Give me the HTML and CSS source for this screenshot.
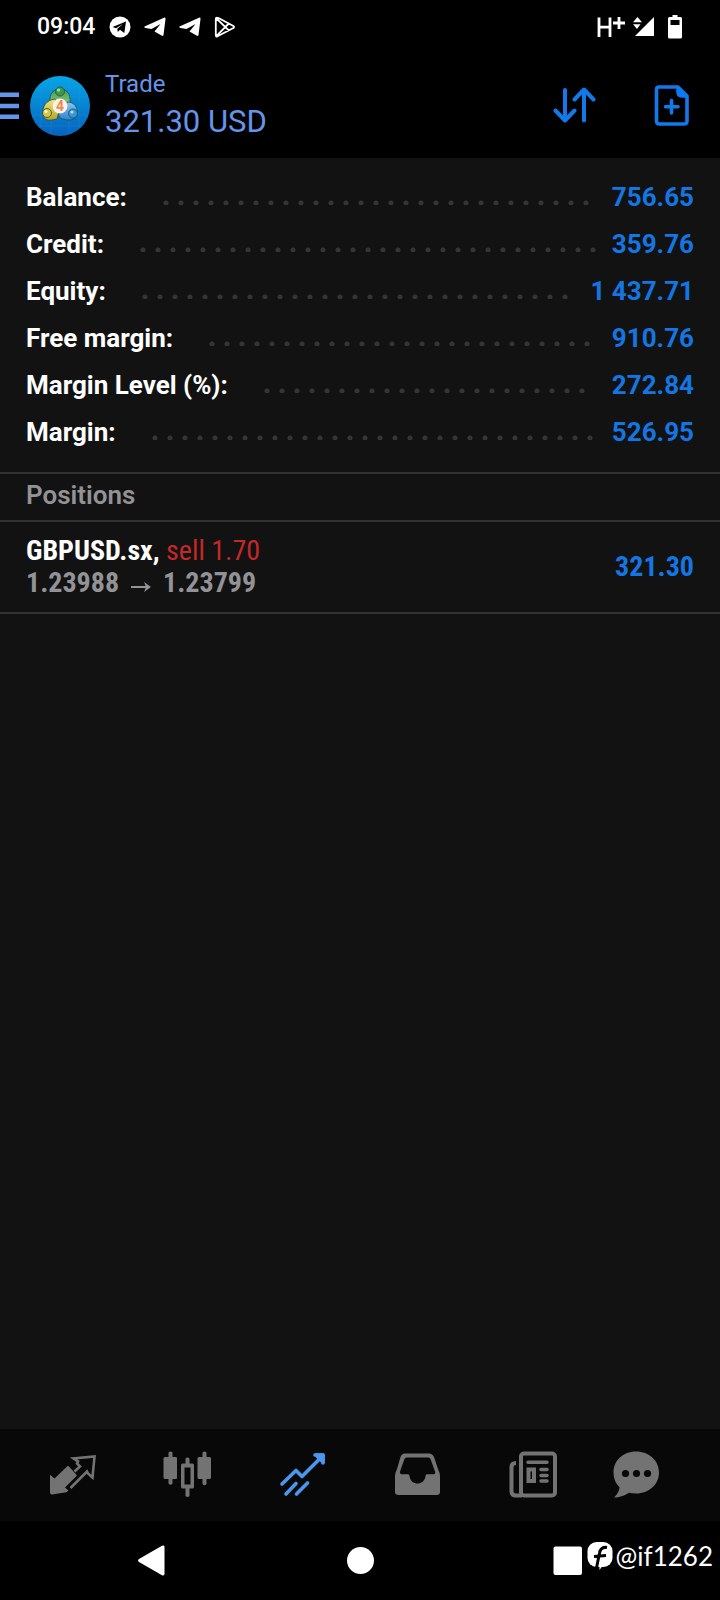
FILE: index.html
```html
<!DOCTYPE html>
<html lang="en">
<head>
<meta charset="utf-8">
<meta name="viewport" content="width=device-width, initial-scale=1">
<title>Trade</title>
<link rel="stylesheet" href="styles.css">
</head>
<body>
<div class="status">
  <time class="clock">09:04</time>
  <svg class="s-icon s-first" width="22" height="22" viewBox="0 0 22 22"><circle cx="11" cy="11" r="10.5" fill="#fff"/><path d="M3.5 11 17 5.5 15.3 17 11 13.8 8.8 16 8.3 12.8 14 8 7 12.2Z" fill="#000"/></svg>
  <svg class="s-icon" width="22" height="22" viewBox="0 0 22 22"><path d="M.5 10.5 20 1.7Q21.700 1.200 21.500 3L19.500 19Q19 20.500 17.500 19.500L10.500 15.500 16.500 8 7.500 13 1.500 12Q-.3 11.300.5 10.500Z" fill="#fff"/></svg>
  <svg class="s-icon" width="22" height="22" viewBox="0 0 22 22"><path d="M.5 10.5 20 1.7Q21.700 1.200 21.500 3L19.500 19Q19 20.500 17.500 19.500L10.500 15.500 16.500 8 7.500 13 1.500 12Q-.3 11.300.5 10.500Z" fill="#fff"/></svg>
  <svg class="s-icon" width="22" height="22" viewBox="0 0 22 22" fill="none" stroke="#fff" stroke-width="1.8" stroke-linejoin="round"><path d="M3 2Q1.800 1.200 1.800 3V19.500Q1.800 21 3.500 20.300L19.400 12Q20.600 11 19.400 10L4 1.800ZM2.500 2.500 14.800 14.300M2.500 19.800 14.800 7.500"/></svg>
  <span class="spacer"></span>
  <svg width="28" height="22" viewBox="0 0 28 22" fill="none" stroke="#fff"><path d="M2 1.500V21M13 1.500V21M2 11.200H13" stroke-width="2.800"/><path d="M22 1V13M16 7H28" stroke-width="2.800"/></svg>
  <svg class="signal" width="22" height="22" viewBox="0 0 22 22" fill="#fff"><path d="M21 1V20H2ZM0 6.200 4.500 1 9 6.200ZM0 8.200H7.500L4 13Z"/></svg>
  <svg class="battery" width="14" height="24" viewBox="0 0 14 24"><path d="M4.500 0H9.500V2H12.500Q14 2 14 3.500V22Q14 23.500 12.500 23.500H1.500Q0 23.500 0 22V3.500Q0 2 1.500 2H4.500Z" fill="#fff"/><path d="M2.500 5H11.500V10H2.500Z" fill="#000"/></svg>
</div>

<header class="bar">
  <button class="menu" aria-label="Menu"><svg width="19" height="28" viewBox="0 0 19 28" fill="#6595eb"><path d="M0 .5H19V5H0ZM0 11.700H19V16.200H0ZM0 22.500H19V27H0Z"/></svg></button>
  <svg class="logo" width="60" height="60" viewBox="0 0 60 60">
    <defs>
      <linearGradient id="sky" x1="0" y1="0" x2="0" y2="1"><stop offset="0" stop-color="#06a5e6"/><stop offset="1" stop-color="#0762bd"/></linearGradient>
      <linearGradient id="green" x1="0" y1="0" x2="0" y2="1"><stop offset="0" stop-color="#3f9a4a"/><stop offset="1" stop-color="#9bd08a"/></linearGradient>
      <linearGradient id="gold" x1="0" y1="0" x2="0" y2="1"><stop offset="0" stop-color="#f0e67a"/><stop offset="1" stop-color="#b9a41f"/></linearGradient>
      <linearGradient id="azure" x1="0" y1="0" x2="0" y2="1"><stop offset="0" stop-color="#8cc7ee"/><stop offset="1" stop-color="#2b83cb"/></linearGradient>
    </defs>
    <circle cx="30" cy="30" r="30" fill="url(#sky)"/>
    <path d="M11 8V52M21 2V58M39 2V58M49 8V52M8 11H52M2 21H58M2 39H58M8 50H52" stroke="#37a4e6" stroke-opacity=".25" stroke-width=".8"/>
    <g stroke="#1c4d56" stroke-width=".8">
      <path d="M20 27C19 17 24 13 30 13S41 17 40 27L37 31H24Z" fill="url(#green)"/>
      <path d="M25 23C16 24 12 31 13 38S18 45 27 43L29 36Z" fill="url(#gold)"/>
      <path d="M37 26C45 26 48 32 47 38S39 46 30 42L28 38 35 35Z" fill="url(#azure)"/>
      <circle cx="30" cy="15.500" r="4.500" fill="#3e9b48"/>
      <circle cx="17" cy="37" r="4.500" fill="#d9c545"/>
      <circle cx="43" cy="37.500" r="4.500" fill="#3a96d7"/>
    </g>
    <circle cx="28.500" cy="14" r="1.600" fill="#a8dda5"/><circle cx="16" cy="35.500" r="1.600" fill="#fff6b0"/><circle cx="42" cy="36" r="1.600" fill="#b4e0fa"/>
    <circle cx="30" cy="30" r="7.500" fill="#f8f3ee"/>
    <text class="logo-digit" x="30" y="35" text-anchor="middle">4</text>
  </svg>
  <div class="heading">
    <h1 class="title">Trade</h1>
    <p class="profit">321.30 USD</p>
  </div>
  <button class="tool" aria-label="Sort"><svg width="44" height="44" viewBox="0 0 44 44" fill="none" stroke="#1279ea" stroke-width="4" stroke-linecap="round" stroke-linejoin="round"><path d="M13 6V36M3.500 26.500 13 36.500 22.500 26.500M32 36.500V6M22.500 15.500 32 5.500 41.500 15.500"/></svg></button>
  <button class="tool" aria-label="New order"><svg width="44" height="44" viewBox="0 0 44 44" fill="none" stroke="#1279ea" stroke-width="3.600" stroke-linecap="round" stroke-linejoin="round"><path d="M9 3H28L37 12V37Q37 40 34 40H9.500Q6.500 40 6.500 37V5.500Q6.500 3 9 3ZM21.500 16.500V29M15.500 22.700H28"/><path d="M27 3V8.500Q27.500 13 32 13H37Z" fill="#087bfa" stroke-width="1.500"/></svg></button>
</header>

<main class="content">
  <dl class="summary">
    <div class="row"><dt>Balance:</dt><dd class="leader"><i class="dots"></i></dd><dd class="value">756.65</dd></div>
    <div class="row"><dt>Credit:</dt><dd class="leader"><i class="dots"></i></dd><dd class="value">359.76</dd></div>
    <div class="row"><dt>Equity:</dt><dd class="leader"><i class="dots"></i></dd><dd class="value">1 437.71</dd></div>
    <div class="row"><dt>Free margin:</dt><dd class="leader"><i class="dots"></i></dd><dd class="value">910.76</dd></div>
    <div class="row"><dt>Margin Level (%):</dt><dd class="leader"><i class="dots"></i></dd><dd class="value">272.84</dd></div>
    <div class="row"><dt>Margin:</dt><dd class="leader"><i class="dots"></i></dd><dd class="value">526.95</dd></div>
  </dl>
  <h2 class="section">Positions</h2>
  <article class="position">
    <div>
      <p class="line"><b>GBPUSD.sx,</b> <span class="sell">sell 1.70</span></p>
      <p class="line prices">1.23988 <svg class="arrow" width="20" height="12" viewBox="0 0 20 12" fill="none" stroke="#929297" stroke-width="2"><path d="M0 6H17"/><path d="M13 1 20 6 13 11 15 6Z" fill="#929297" stroke="none"/></svg> 1.23799</p>
    </div>
    <p class="line gain">321.30</p>
  </article>
</main>

<nav class="tabs">
  <button class="tab" aria-label="Quotes"><svg width="48" height="48" viewBox="0 0 48 48" fill="none" stroke="#737373" stroke-width="2.600"><path d="M2 17Q2 15 3.500 17L6.500 19.500 18.500 8Q20 6 21.500 8L29 16.500 17 28.500 20.500 31.500Q19 33.500 17 33.500L4 35.500Q2 35.500 2 33.500Z" transform="translate(0 8)" fill="#737373" stroke="none"/><path d="M26.500 20.500 32 15.500 29 12.500 30 10.500 25.500 7.500 46.500 5.500 44.500 26.500 40 22.500 39 20.500 22.500 37"/></svg></button>
  <button class="tab" aria-label="Charts"><svg width="48" height="48" viewBox="0 0 48 48" fill="#737373"><path d="M5.500 1.500Q7.500-.5 9.500 1.500V6H13Q14 6 14 7.500V26.500Q14 28 13 28H9.500V32.500Q7.500 35 5.500 32.500V28H2Q.5 28 .5 26.500V7.500Q.5 6 2 6H5.500ZM39.500 1.500Q41.500-.5 43.500 1.500V6H46.500Q48 6 48 7.500V26.500Q48 28 46.500 28H43.500V33Q41.500 35.500 39.500 33V28H36Q34.500 28 34.500 26.500V7.500Q34.500 6 36 6H39.500Z"/><path fill-rule="evenodd" d="M22.500 7.500Q24.500 5.500 26.500 7.500V12.500H29.500Q31 12.500 31 14V36Q31 37.500 29.500 37.500H26.500V45Q24.500 47 22.500 45V37.500H19.500Q18 37.500 18 36V14Q18 12.500 19.500 12.500H22.500ZM21.500 16.500V33.500H27.500V16.500Z"/></svg></button>
  <button class="tab" aria-label="Trade"><svg width="48" height="48" viewBox="0 0 48 48" fill="none" stroke="#4a97ee" stroke-width="3.600" stroke-linecap="round" stroke-linejoin="round"><path d="M4 33 18 19.500 24 25.500 43 6.500M8 43 18 32.500M18.500 43 29.500 32"/><path d="M37 4H45V12"/><path d="M38 4H45V11Z" fill="#4a97ee"/></svg></button>
  <button class="tab" aria-label="History"><svg width="48" height="48" viewBox="0 0 48 48"><path fill="#737373" fill-rule="evenodd" d="M12 2.500H36Q39.500 2.500 41 6L45 18Q47 22 47 25V41Q47 44 43.500 44H5.500Q2 44 2 41V25Q2 22 4 18L7.500 6Q8.500 2.500 12 2.500ZM13.500 6.500Q12 6.500 11.300 8.500L7 20.500Q6.500 23 8.500 23.300H15Q16.500 23.500 16.500 25C17.500 35 31.500 35 32.500 25Q32.500 23.500 34 23.300H40.500Q43 23 42 20.500L37.700 8.500Q37 6.500 35.500 6.500Z"/></svg></button>
  <button class="tab" aria-label="News"><svg width="48" height="48" viewBox="0 0 48 48" fill="none" stroke="#737373" stroke-width="4"><rect x="13" y="2.500" width="34" height="42" rx="3"/><path d="M8 12Q3.500 12 3.500 16V40.500Q3.500 44.500 8 44.500H14"/><path d="M20 11.200H39M33 18.500H39M33 24.500H39M33 30H39" stroke-width="3.500" stroke-linecap="round"/><rect x="20.500" y="18.500" width="5.500" height="11.500"/></svg></button>
  <button class="tab" aria-label="Messages"><svg width="48" height="48" viewBox="0 0 48 48"><path fill="#737373" d="M24 .5C37 .5 47 9.500 47 21.500S37 42.500 24 42.500Q20 42.500 17 41.800 10 46.500 2 46.500 7.500 41.500 7.500 36.300 1.500 30.500 1.500 21.500C1.500 9.500 11 .5 24 .5Z"/><g fill="#080808"><circle cx="13.500" cy="22.500" r="3.600"/><circle cx="24.500" cy="22.500" r="3.600"/><circle cx="35.500" cy="22.500" r="3.600"/></g></svg></button>
</nav>

<footer class="system">
  <button class="key" aria-label="Back"><svg width="32" height="32" viewBox="0 0 32 32"><path d="M3 17Q1 15.500 3 14L26 .7Q28.500 0 28.500 2V29Q28.500 31 26 30.300Z" fill="#fff"/></svg></button>
  <button class="key" aria-label="Home"><svg width="32" height="32" viewBox="0 0 32 32"><circle cx="16.500" cy="15.500" r="13.500" fill="#fff"/></svg></button>
  <button class="key" aria-label="Recents"><svg width="32" height="32" viewBox="0 0 32 32"><rect x="1.500" y="1.500" width="28.500" height="28.500" rx="2" fill="#fff"/></svg></button>
  <div class="watermark">
    <svg width="26" height="30" viewBox="0 0 26 30"><rect x=".5" y="1" width="25" height="25" rx="9" fill="#fff"/><path d="M20 6.500Q13.500 5.500 12.500 12L9.500 27M7 15.500 19 14.500" fill="none" stroke="#000" stroke-width="3"/><path d="M12.500 21 18.500 20.500 12.500 29Z" fill="#fff"/></svg>
    <span>@if1262</span>
  </div>
</footer>
</body>
</html>
```

FILE: styles.css
```css
* { box-sizing: border-box; }

body {
  margin: 0;
  min-height: 100vh;
  display: flex;
  flex-direction: column;
  background: #000;
  color: #fff;
  font-family: Roboto, "Noto Sans", sans-serif;
}

h1, h2, p, dl, dd { margin: 0; font-weight: 400; }

svg { display: block; }

button {
  padding: 0;
  border: 0;
  background: none;
  color: inherit;
}

.status {
  display: flex;
  align-items: center;
  height: 53px;
  padding: 0 38px 0 37px;
}

.clock { font-size: 23px; font-weight: 500; line-height: 28px; }
.s-icon { margin-left: 13px; }
.s-icon.s-first { margin-left: 14px; }
.spacer { flex: 1; }
.signal { margin-left: 8px; }
.battery { margin-left: 13px; }

.bar {
  display: flex;
  align-items: center;
  height: 105px;
  padding-right: 26px;
}

.logo { margin-left: 11px; }

.logo-digit {
  font-family: Roboto, sans-serif;
  font-size: 14px;
  font-weight: 700;
  fill: #f08a4b;
}

.heading {
  flex: 1;
  padding-left: 15px;
  color: #6595eb;
}

.title { font-size: 24px; line-height: 32px; }
.profit { font-size: 31px; line-height: 44px; }
.tool + .tool { margin-left: 54px; }

.content {
  flex: 1;
  background: #121212;
}

.summary { padding: 16px 26px; }

.row {
  display: flex;
  align-items: center;
  font-size: 26px;
  line-height: 47px;
}

.row dt { font-weight: 700; }
.row .value { font-weight: 700; color: #1476e3; }

.leader {
  flex: 1;
  padding: 10px 6px 0 36px;
}

.dots {
  display: block;
  width: 100%;
  width: round(down, 100%, 15px);
  height: 5px;
  background: radial-gradient(circle at 3px 3px, #353535 2px, transparent 3px) 0 0 / 15px 5px;
}

.section {
  border: solid #323232;
  border-width: 2px 0;
  padding: 0 26px 4px;
  color: #929297;
  font-size: 26px;
  font-weight: 600;
  line-height: 42px;
}

.position {
  display: flex;
  align-items: center;
  justify-content: space-between;
  height: 92px;
  padding: 0 26px;
  border-bottom: 2px solid #323232;
  font-family: "Roboto Condensed", "Liberation Sans Narrow", Roboto, sans-serif;
}

.line { font-size: 28px; line-height: 32px; }
.sell { color: #c62828; }
.prices { display: flex; align-items: center; gap: 12px; color: #929297; font-weight: 700; }
.arrow { margin-top: 8px; }
.gain { color: #1476e3; font-weight: 700; }

.tabs {
  display: grid;
  grid-template-columns: repeat(4, 115fr) 104fr 48px;
  align-items: center;
  height: 92px;
  padding: 0 60px 0 48px;
  background: #080808;
}

.tab svg { overflow: visible; }

.system {
  position: relative;
  display: flex;
  align-items: center;
  justify-content: space-between;
  height: 79px;
  padding: 0 136px;
}

.watermark {
  position: absolute;
  right: 7px;
  top: 20px;
  display: flex;
  align-items: center;
  gap: 3px;
  font-family: Lato, sans-serif;
  font-size: 26px;
  line-height: 30px;
}
```
